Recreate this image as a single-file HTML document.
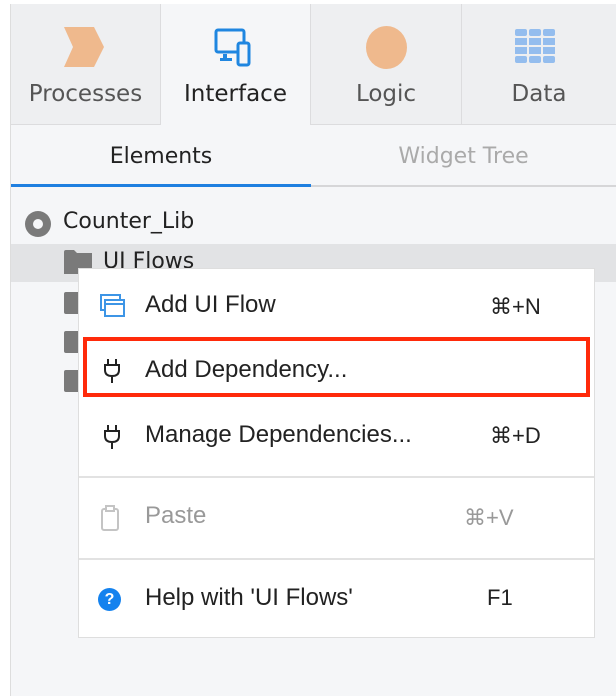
<!DOCTYPE html>
<html><head><style>
body{margin:0;width:616px;height:696px;background:#f5f6f8;position:relative;overflow:hidden;font-family:"Liberation Sans",sans-serif;}
.abs{position:absolute}
.tab{position:absolute;top:4px;height:121px;background:#eeeff1;border-right:1px solid #dcdcde;border-bottom:1px solid #dcdcde;box-sizing:border-box;text-align:center;font-family:"DejaVu Sans",sans-serif;font-size:23px;color:#555}
.tab span{position:absolute;left:0;right:0;top:77px}
.mi{position:absolute;left:145px;font-size:24px;color:#222}
.sc{position:absolute;font-size:22px;color:#222}
</style></head><body>
<div class="abs" style="left:0;top:0;width:10px;height:696px;background:#fff;border-right:1px solid #ddd"></div>
<div class="abs" style="left:10px;top:0;width:606px;height:4px;background:#fff;border-bottom:1px solid #ddd"></div>
<div class="tab" style="left:11px;width:150px"><svg class="abs" style="left:53px;top:23px" width="42" height="40"><path d="M0 0H30L40 20L30 40H0L9 20Z" fill="#efb98d"/></svg><span>Processes</span></div>
<div class="tab" style="left:161px;width:150px;background:#f5f6f8;border-bottom:none;color:#222"><svg class="abs" style="left:53px;top:24px" width="44" height="42"><rect x="2" y="2" width="28" height="22" rx="2" fill="none" stroke="#1f86e0" stroke-width="3"/><rect x="9" y="26" width="4" height="6" fill="#1f86e0"/><rect x="6" y="30" width="12" height="3" fill="#1f86e0"/><rect x="24" y="15" width="11" height="22" rx="2" fill="#f5f6f8" stroke="#1f86e0" stroke-width="3"/></svg><span>Interface</span></div>
<div class="tab" style="left:311px;width:151px"><div class="abs" style="left:55px;top:22px;width:41px;height:43px;border-radius:50%;background:#efb98d"></div><span>Logic</span></div>
<div class="tab" style="left:462px;width:154px;border-right:none"><svg class="abs" style="left:53px;top:25px" width="40" height="36"><g fill="#94bdee"><rect x="0" y="0" width="12" height="7" rx="2"/><rect x="14" y="0" width="12" height="7" rx="2"/><rect x="28" y="0" width="12" height="7" rx="2"/><rect x="0" y="9" width="12" height="7"/><rect x="14" y="9" width="12" height="7"/><rect x="28" y="9" width="12" height="7"/><rect x="0" y="18" width="12" height="7"/><rect x="14" y="18" width="12" height="7"/><rect x="28" y="18" width="12" height="7"/><rect x="0" y="27" width="12" height="7" rx="2"/><rect x="14" y="27" width="12" height="7" rx="2"/><rect x="28" y="27" width="12" height="7" rx="2"/></g></svg><span>Data</span></div>
<div class="abs" style="left:11px;top:144px;width:300px;text-align:center;font-family:'DejaVu Sans',sans-serif;font-size:22px;color:#222">Elements</div>
<div class="abs" style="left:311px;top:144px;width:305px;text-align:center;font-family:'DejaVu Sans',sans-serif;font-size:22px;color:#aaa">Widget Tree</div>
<div class="abs" style="left:11px;top:185px;width:605px;height:2px;background:#d6d6d8"></div>
<div class="abs" style="left:11px;top:184px;width:300px;height:3px;background:#1f7fe0"></div>
<div class="abs" style="left:25px;top:211px;width:26px;height:26px;border-radius:50%;background:#7a7a7a"></div>
<div class="abs" style="left:33px;top:219px;width:10px;height:10px;border-radius:50%;background:#f5f6f8"></div>
<div class="abs" style="left:63px;top:209px;font-family:'DejaVu Sans',sans-serif;font-size:22px;color:#222">Counter_Lib</div>
<div class="abs" style="left:11px;top:244px;width:605px;height:38px;background:#e2e3e5"></div>
<svg class="abs" style="left:64px;top:250px" width="30" height="24"><path d="M0 2Q0 0 2 0H10L13 3H28V24H0Z" fill="#7a7a7a"/></svg>
<div class="abs" style="left:103px;top:249px;font-family:'DejaVu Sans',sans-serif;font-size:22px;color:#222">UI Flows</div>
<div class="abs" style="left:64px;top:292px;width:16px;height:22px;background:#7a7a7a;border-radius:2px"></div>
<div class="abs" style="left:64px;top:331px;width:16px;height:22px;background:#7a7a7a;border-radius:2px"></div>
<div class="abs" style="left:64px;top:370px;width:16px;height:22px;background:#7a7a7a;border-radius:2px"></div>
<div class="abs" style="left:78px;top:268px;width:517px;height:370px;background:#fff;border:1px solid #dedede;box-sizing:border-box"></div>
<div class="abs" style="left:79px;top:476px;width:515px;height:2px;background:#e2e2e2"></div>
<div class="abs" style="left:79px;top:558px;width:515px;height:2px;background:#e2e2e2"></div>
<div class="abs" style="left:83px;top:337px;width:507px;height:60px;border:4px solid #ff2a0a;box-sizing:border-box"></div>
<svg class="abs" style="left:100px;top:294px" width="26" height="24"><rect x="1" y="1" width="19" height="15" fill="none" stroke="#3d95e6" stroke-width="2"/><rect x="5" y="6" width="19" height="16" fill="#fff" stroke="#3d95e6" stroke-width="2"/><line x1="5" y1="10" x2="24" y2="10" stroke="#3d95e6" stroke-width="2"/></svg>
<div class="mi" style="top:291px">Add UI Flow</div><div class="sc" style="left:490px;top:294px">⌘+N</div>
<svg class="abs" style="left:103px;top:358px" width="18" height="26"><path d="M5 1V7M13 1V7M2 7H16V12Q16 18 9 18Q2 18 2 12Z M9 18V25" fill="none" stroke="#222" stroke-width="2"/></svg>
<div class="mi" style="top:356px">Add Dependency...</div>
<svg class="abs" style="left:103px;top:424px" width="18" height="26"><path d="M5 1V7M13 1V7M2 7H16V12Q16 18 9 18Q2 18 2 12Z M9 18V25" fill="none" stroke="#222" stroke-width="2"/></svg>
<div class="mi" style="top:421px">Manage Dependencies...</div><div class="sc" style="left:490px;top:423px">⌘+D</div>
<svg class="abs" style="left:100px;top:504px" width="22" height="28"><rect x="2" y="5" width="16" height="21" rx="2" fill="none" stroke="#c4c4c4" stroke-width="2"/><rect x="6" y="2" width="8" height="5" fill="#fff" stroke="#c4c4c4" stroke-width="2"/></svg>
<div class="mi" style="top:502px;color:#999">Paste</div><div class="sc" style="left:464px;top:505px;color:#999">⌘+V</div>
<div class="abs" style="left:98px;top:588px;width:23px;height:23px;border-radius:50%;background:#1482ee;color:#fff;font-size:16px;font-weight:bold;text-align:center;line-height:23px">?</div>
<div class="mi" style="top:584px">Help with 'UI Flows'</div><div class="sc" style="left:487px;top:585px">F1</div>
</body></html>
